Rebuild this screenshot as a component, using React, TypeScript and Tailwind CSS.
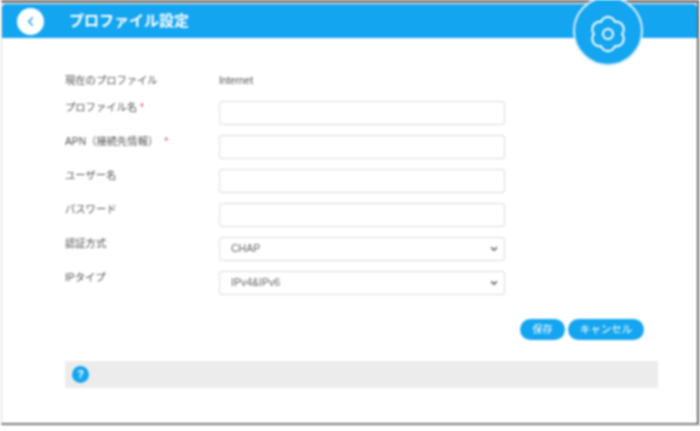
import React from "react";
import { ChevronDown, ChevronLeft } from "lucide-react";

const labelClass = "w-[154px] shrink-0 pt-[1px] text-[10.3px] leading-[12px] text-[#555]";
const fieldClass =
  "h-[24px] w-[286px] rounded-[3px] border border-[#dcdcdc] bg-white pl-[11px] pr-[8px] flex items-center text-[10.5px] text-[#666]";

// rounded six lobe cog, the settings icon in the round badge
const cogPath = () => {
  const pts: string[] = [];
  for (let i = 0; i < 180; i++) {
    const a = (i / 180) * Math.PI * 2;
    const r = 14 + 3 * Math.pow(Math.abs(Math.cos(3 * a)), 0.9);
    const x = 20 + r * Math.sin(a);
    const y = 20 - r * Math.cos(a);
    pts.push(`${i === 0 ? "M" : "L"}${x.toFixed(2)} ${y.toFixed(2)}`);
  }
  return pts.join(" ") + " Z";
};

const Row = ({ label, star, children }: { label: string; star?: string; children: React.ReactNode }) => (
  <div className="flex items-start h-[24px]">
    <div className={labelClass}>
      {label}
      {star && <span className={`text-[#e8505b] ${star}`}>*</span>}
    </div>
    {children}
  </div>
);

const SelectBox = ({ value }: { value: string }) => (
  <div className={`${fieldClass} justify-between`}>
    <span>{value}</span>
    <ChevronDown size={10} strokeWidth={3.5} className="text-[#555] -mr-[3px]" />
  </div>
);

const App: React.FC = () => {
  return (
    <div className="h-[431px] w-[700px] bg-white overflow-hidden blur-[0.8px] font-['Liberation_Sans','Noto_Sans_CJK_JP',sans-serif]">
      <div className="h-[425px] ml-[1px] w-[698px] border-t-[3px] border-b-[2px] border-r-[2px] border-l border-t-[#777] border-b-[#777] border-r-[#666] border-l-[#ddd] pt-[1px]">
        <div className="relative h-[34px] bg-[#14a5f0] rounded-t-[4px] flex items-center">
          <div className="ml-[15px] h-[27px] w-[27px] rounded-full bg-white flex items-center justify-center">
            <ChevronLeft size={15} strokeWidth={2.5} className="text-[#14a5f0]" />
          </div>
          <div className="ml-[25px] text-[15px] font-bold text-white mt-[1px]">プロファイル設定</div>
          <div className="absolute left-[571px] -top-[8px] h-[70px] w-[70px] rounded-full bg-[#14a5f0] border-2 border-[#d8eefb] flex items-center justify-center">
            <svg width="40" height="40" viewBox="0 0 40 40" fill="none" stroke="white" strokeWidth="2" className="mt-[5px]">
              <path d={cogPath()} strokeLinejoin="round" />
              <circle cx="20" cy="20" r="5" />
            </svg>
          </div>
        </div>

        <div className="pl-[63px] pr-[38px]">
          <div className="flex items-center mt-[36px] h-[12px]">
            <div className={labelClass}>現在のプロファイル</div>
            <div className="text-[10px] pt-[1px] text-[#555]">Internet</div>
          </div>

          <div className="mt-[15px] flex flex-col gap-[10px]">
            <Row label="プロファイル名 " star="ml-[0px]">
              <div className={fieldClass} />
            </Row>
            <Row label="APN（接続先情報） " star="ml-[3px]">
              <div className={fieldClass} />
            </Row>
            <Row label="ユーザー名">
              <div className={fieldClass} />
            </Row>
            <Row label="パスワード">
              <div className={fieldClass} />
            </Row>
            <Row label="認証方式">
              <SelectBox value="CHAP" />
            </Row>
            <Row label="IPタイプ">
              <SelectBox value="IPv4&IPv6" />
            </Row>
          </div>

          <div className="mt-[24px] flex justify-end gap-[3px] pr-[15px]">
            <button className="h-[21px] w-[45px] rounded-full bg-[#14a5f0] text-[10px] text-white">保存</button>
            <button className="h-[21px] w-[76px] rounded-full bg-[#14a5f0] text-[10.5px] text-white">キャンセル</button>
          </div>

          <div className="mt-[21px] h-[27px] w-[593px] bg-[#ececec] flex items-center pl-[7px]">
            <div className="h-[17px] w-[17px] rounded-full bg-[#14a5f0] flex items-center justify-center text-[11px] font-bold text-white">?</div>
          </div>
        </div>
      </div>
    </div>
  );
};

export default App;
